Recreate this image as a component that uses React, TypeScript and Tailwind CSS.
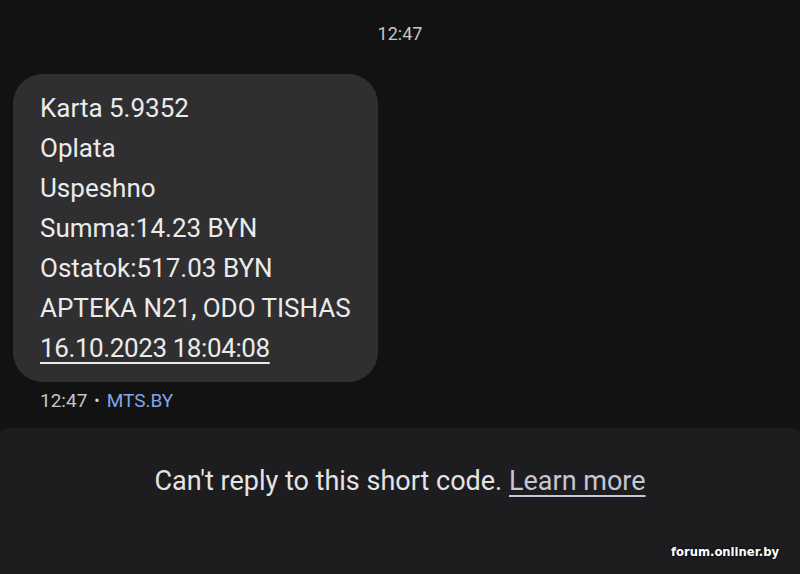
const lines = [
  "Karta 5.9352",
  "Oplata",
  "Uspeshno",
  "Summa:14.23 BYN",
  "Ostatok:517.03 BYN",
  "APTEKA N21, ODO TISHAS",
];

export default function App() {
  return (
    <div
      className="relative flex h-[574px] w-[800px] flex-col overflow-hidden bg-[#121212]"
      style={{ fontFamily: "Roboto, 'Noto Sans', sans-serif" }}
    >
      {/* date header */}
      <div className="flex h-[68px] items-start justify-center pt-[22px] text-[18px] leading-[24px] text-[#c6c6c6]">
        12:47
      </div>

      {/* message bubble */}
      <div className="ml-[13px] mt-[6px] w-[365px] rounded-[30px] bg-[#2f2f31] px-[27px] pb-[14px] pt-[14px] text-[26px] leading-[40px] text-[#ebebeb]">
        {lines.map((l) => (
          <div key={l}>{l}</div>
        ))}
        <div>
          <span className="tracking-[-0.4px] underline decoration-2 underline-offset-[5px]">16.10.2023 18:04:08</span>
        </div>
      </div>

      <div className="ml-[40px] mt-[7px] flex items-center gap-[7px] text-[19px] leading-[24px] text-[#c6c6c6]">
        <span>12:47</span>
        <span className="text-[16px] text-[#d6d6d6]">•</span>
        <span className="text-[#7ea7ec]">MTS.BY</span>
      </div>

      {/* bottom notice */}
      <div className="mt-[15px] flex flex-1 justify-center rounded-t-[8px] bg-[#1d1d1f] pt-[35px]">
        <div className="text-[27px] leading-[36px] text-[#e4e4e4]">
          Can't reply to this short code.{" "}
          <span className="text-[#c5c7d6] underline decoration-2 underline-offset-[5px]">Learn more</span>
        </div>
      </div>

      {/* watermark */}
      <div
        className="absolute bottom-[15px] right-[21px] text-[11.6px] font-bold leading-none text-white [text-shadow:0_0_3px_rgba(0,0,0,0.9)]"
        style={{ fontFamily: "'DejaVu Sans', sans-serif" }}
      >
        forum.onliner.by
      </div>
    </div>
  );
}
